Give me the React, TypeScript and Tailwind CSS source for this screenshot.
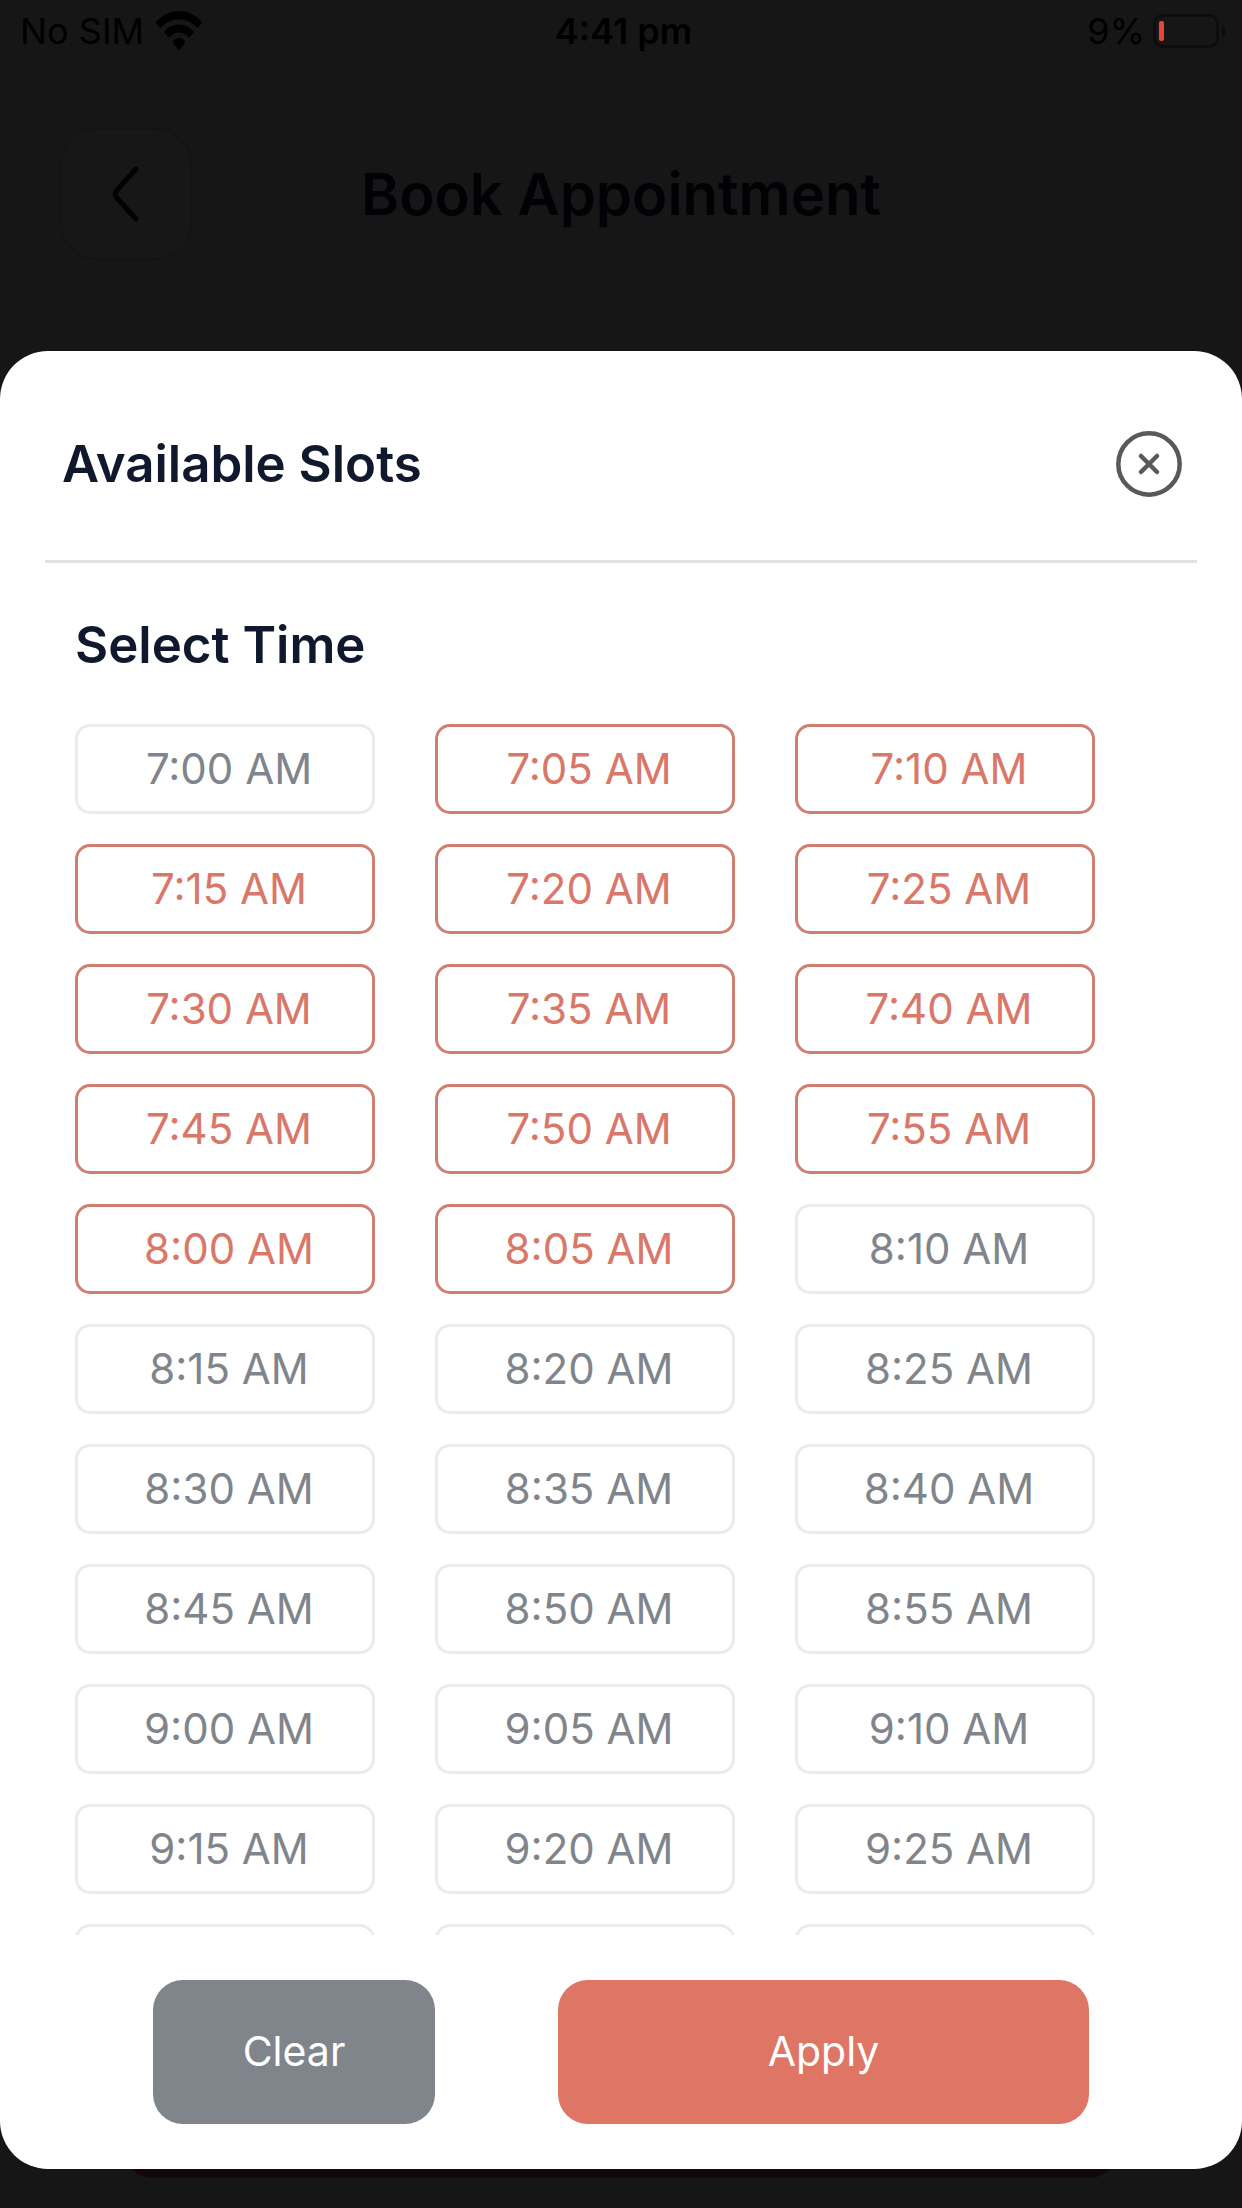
import React, { useState } from "react";

const SLOTS = [
  "7:00 AM", "7:05 AM", "7:10 AM",
  "7:15 AM", "7:20 AM", "7:25 AM",
  "7:30 AM", "7:35 AM", "7:40 AM",
  "7:45 AM", "7:50 AM", "7:55 AM",
  "8:00 AM", "8:05 AM", "8:10 AM",
  "8:15 AM", "8:20 AM", "8:25 AM",
  "8:30 AM", "8:35 AM", "8:40 AM",
  "8:45 AM", "8:50 AM", "8:55 AM",
  "9:00 AM", "9:05 AM", "9:10 AM",
  "9:15 AM", "9:20 AM", "9:25 AM",
  "9:30 AM", "9:35 AM", "9:40 AM",
];

const StatusBar = () => (
  <div className="grid h-[62px] shrink-0 grid-cols-3 items-center pl-5 pr-[15px] text-4xl text-black">
    <div className="flex items-center gap-3">
      <span>No SIM</span>
      <svg className="h-[40px] w-[46px]" viewBox="0 0 46 34" preserveAspectRatio="none" fill="currentColor" aria-hidden="true">
        <path d="M23 0C14.300 0 6.400 3.400 0.600 9a1.200 1.200 0 0 0 0 1.700l3.200 3.200a1.200 1.200 0 0 0 1.600 0A25.500 25.500 0 0 1 23 7a25.500 25.500 0 0 1 17.600 6.900 1.200 1.200 0 0 0 1.600 0l3.200-3.200a1.200 1.200 0 0 0 0-1.700A32 32 0 0 0 23 0Z" />
        <path d="M23 11.500c-5.500 0-10.500 2.100-14.200 5.600a1.200 1.200 0 0 0 0 1.700l3.300 3.200a1.200 1.200 0 0 0 1.600 0 13.600 13.600 0 0 1 18.600 0 1.200 1.200 0 0 0 1.600 0l3.300-3.200a1.200 1.200 0 0 0 0-1.700A20.500 20.500 0 0 0 23 11.500Z" />
        <path d="M23 23a9 9 0 0 0-5.900 2.200 1.200 1.200 0 0 0 0 1.700l5 5.900a1.200 1.200 0 0 0 1.800 0l5-5.900a1.200 1.200 0 0 0 0-1.700A9 9 0 0 0 23 23Z" />
      </svg>
    </div>
    <span className="text-center font-semibold">4:41 pm</span>
    <div className="flex items-center justify-end gap-2">
      <span>9%</span>
      <svg className="h-[34px] w-[74px]" viewBox="0 0 74 34" aria-hidden="true">
        <rect x="1.500" y="1.500" width="63" height="31" rx="8" fill="none" stroke="#0d0d0d" strokeWidth="3" />
        <rect x="6" y="7" width="5" height="20" rx="2" fill="#ea4536" />
        <path d="M69 11c2.400 1 4 3.300 4 6s-1.600 5-4 6Z" fill="#0d0d0d" />
      </svg>
    </div>
  </div>
);

const App = () => {
  const [selected, setSelected] = useState<string[]>(SLOTS.slice(1, 14));

  const toggle = (slot: string) => {
    setSelected((prev) =>
      prev.includes(slot) ? prev.filter((s) => s !== slot) : [...prev, slot]
    );
  };

  return (
    <div className="relative flex h-screen flex-col bg-[#161616] pb-[39px] font-['Inter',sans-serif]">
      <StatusBar />

      {/* Dimmed page header */}
      <header className="grid grid-cols-[132px_1fr_132px] items-center px-[60px] pt-[66px] pb-[91px]">
        <button
          type="button"
          aria-label="Back"
          className="flex h-[132px] items-center justify-center rounded-[36px] border-2 border-[#141414] bg-[#171717] text-[#020206]"
        >
          <svg className="h-14 w-7" viewBox="0 0 28 56" fill="none" stroke="currentColor" strokeWidth="5" strokeLinecap="round" strokeLinejoin="round" aria-hidden="true">
            <path d="M24 3 5 24c-2.400 2.700-2.400 5.300 0 8l19 21" />
          </svg>
        </button>
        <h1 className="text-center text-[58px] leading-[64px] font-semibold text-[#020206]">Book Appointment</h1>
      </header>

      {/* Page button that shows under the sheet */}
      <div className="absolute inset-x-[123px] bottom-[30px] h-24 rounded-[30px] bg-[#140709]" />

      <section
        role="dialog"
        aria-labelledby="slots-title"
        className="relative flex min-h-0 flex-1 flex-col rounded-[48px] bg-white"
      >
        <div className="mx-[45px] flex h-[212px] shrink-0 items-center justify-between border-b-3 border-[#e2e2e2] pt-4 pr-[15px] pl-[17px]">
          <h2 id="slots-title" className="text-[51px] leading-[68px] font-semibold text-[#10182e]">Available Slots</h2>
          <button type="button" aria-label="Close" className="text-[#595959]">
            <svg className="size-[66px]" viewBox="0 0 66 66" fill="none" stroke="currentColor" strokeLinecap="round" aria-hidden="true">
              <circle cx="33" cy="33" r="30.700" strokeWidth="4.500" />
              <path d="m25 25 16 16M41 25 25 41" strokeWidth="4.500" />
            </svg>
          </button>
        </div>

        <div className="min-h-0 flex-1 overflow-y-auto pr-[147px] pl-[75px] [scrollbar-width:none]">
          <h3 className="pt-12 pb-[45px] text-[51px] leading-[68px] font-semibold text-[#10182e]">Select Time</h3>
          <div className="grid grid-cols-3 gap-x-[60px] gap-y-[30px]">
            {SLOTS.map((slot) => {
              const active = selected.includes(slot);
              return (
                <button
                  key={slot}
                  type="button"
                  aria-pressed={active}
                  onClick={() => toggle(slot)}
                  className={`h-[90px] rounded-[15px] border-3 pl-2 text-[42px] leading-none ${
                    active ? "border-[#d17d70] text-[#d97769]" : "border-[#ebebeb] text-[#80858c]"
                  }`}
                >
                  {slot}
                </button>
              );
            })}
          </div>
        </div>

        <div className="flex shrink-0 gap-[123px] px-[153px] py-[45px] text-[41px] text-white">
          <button type="button" onClick={() => setSelected([])} className="h-36 w-[282px] rounded-[30px] bg-[#80858c]">
            Clear
          </button>
          <button type="button" className="h-36 flex-1 rounded-[30px] bg-[#df7565]">
            Apply
          </button>
        </div>
      </section>
    </div>
  );
};

export default App;
